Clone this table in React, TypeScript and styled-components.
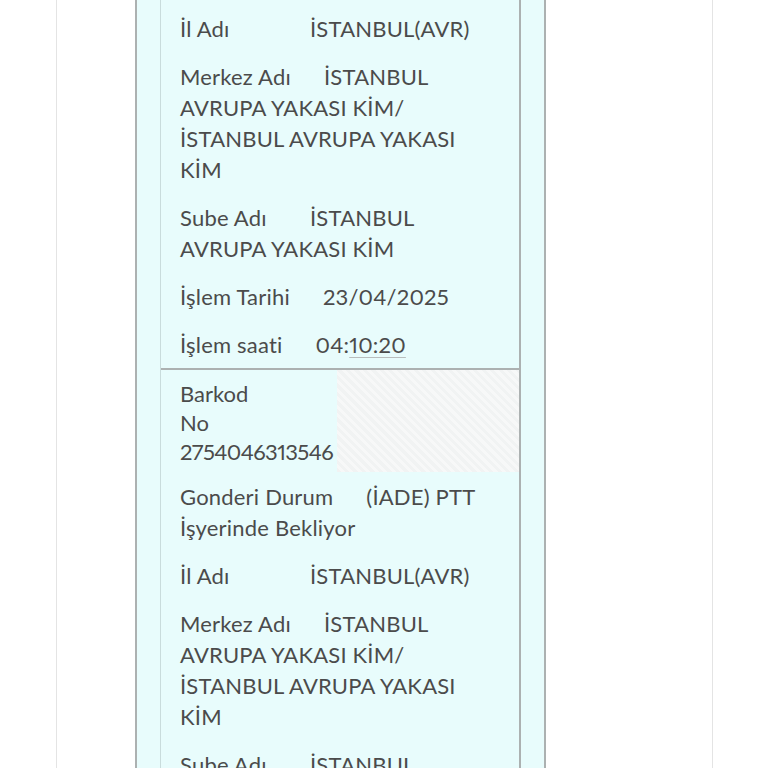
import React from "react";
import styled, { createGlobalStyle } from "styled-components";

const Global = createGlobalStyle`
  html, body {
    margin: 0;
    padding: 0;
    background: #ffffff;
    overflow: hidden;
    height: 768px;
  }
  body {
    font-family: "Lato", "Open Sans", sans-serif;
    font-feature-settings: "pnum" 1, "lnum" 1;
    color: #4b4b4b;
  }
`;

const Page = styled.div`
  margin-left: 56px;
  width: 655px;
  min-height: 768px;
  border-left: 1px solid #e4e4e4;
  border-right: 1px solid #e4e4e4;
  background: #ffffff;
`;

const Panel = styled.div`
  margin-left: 78px;
  width: 361px;
  min-height: 768px;
  padding: 0 23px;
  background: #e8fcfc;
  border-left: 2px solid #acb1b1;
  border-right: 2px solid #acb1b1;
`;

const Card = styled.div`
  padding-top: 4px;
  min-height: 764px;
  border-left: 1px solid #c9dcdc;
  border-right: 2px solid #acb1b1;
  background: #e8fcfc;
`;

const Row = styled.div`
  padding: 8.5px 32px 8.5px 19px;
  font-size: 22px;
  line-height: 31px;
  letter-spacing: 0.2px;
`;

const Label = styled.span`
  display: inline-block;
  min-width: 97px;
  margin-right: 33px;
`;

const Linked = styled.span`
  text-decoration: underline;
  text-decoration-color: #b9bdbd;
  text-decoration-thickness: 1px;
  text-underline-offset: 4px;
`;

const BarcodeRow = styled.div`
  display: grid;
  grid-template-columns: min-content 1fr;
  column-gap: 4px;
  border-top: 2px solid #acb1b1;
  padding-left: 19px;
  font-size: 22px;
  line-height: 29px;
`;

const BarcodeText = styled.div`
  padding-top: 9px;
`;

const BarcodeLabel = styled.div`
  width: min-content;
`;

const BarcodeNumber = styled.div`
  letter-spacing: -0.6px;
`;

const BarcodeImage = styled.div`
  height: 102px;
  background: repeating-linear-gradient(
    45deg,
    #f1f3f3 0px,
    #f1f3f3 3px,
    #f7f8f8 3px,
    #f7f8f8 6px
  );
`;

type Field = { label: string; value: React.ReactNode };

const merkez = (
  <>
    İSTANBUL AVRUPA YAKASI KİM/<wbr />İSTANBUL AVRUPA YAKASI KİM
  </>
);

const upperFields: Field[] = [
  { label: "İl Adı", value: "İSTANBUL(AVR)" },
  { label: "Merkez Adı", value: merkez },
  { label: "Sube Adı", value: "İSTANBUL AVRUPA YAKASI KİM" },
  { label: "İşlem Tarihi", value: "23/04/2025" },
  {
    label: "İşlem saati",
    value: (
      <>
        04:<Linked>10:20</Linked>
      </>
    ),
  },
];

const lowerFields: Field[] = [
  { label: "Gonderi Durum", value: "(İADE) PTT İşyerinde Bekliyor" },
  { label: "İl Adı", value: "İSTANBUL(AVR)" },
  { label: "Merkez Adı", value: merkez },
  { label: "Sube Adı", value: "İSTANBUL AVRUPA YAKASI KİM" },
  { label: "İşlem Tarihi", value: "23/04/2025" },
];

const FieldRow = ({ label, value }: Field) => (
  <Row>
    <Label>{label}</Label>
    {value}
  </Row>
);

export default function App() {
  return (
    <>
      <Global />
      <Page>
        <Panel>
          <Card>
            {upperFields.map((f, i) => (
              <FieldRow key={"u" + i} {...f} />
            ))}
            <BarcodeRow>
              <BarcodeText>
                <BarcodeLabel>Barkod No</BarcodeLabel>
                <BarcodeNumber>2754046313546</BarcodeNumber>
              </BarcodeText>
              <BarcodeImage />
            </BarcodeRow>
            {lowerFields.map((f, i) => (
              <FieldRow key={"l" + i} {...f} />
            ))}
          </Card>
        </Panel>
      </Page>
    </>
  );
}
